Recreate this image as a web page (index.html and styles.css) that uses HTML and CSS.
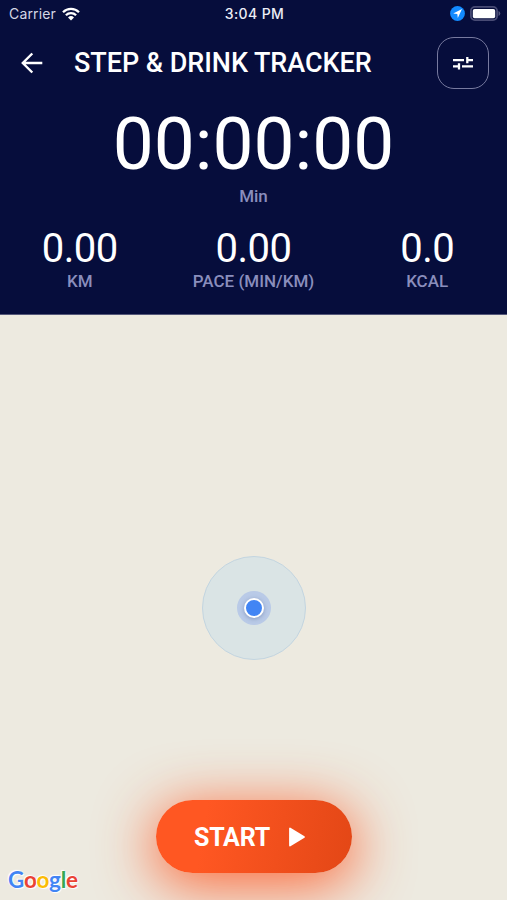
FILE: index.html
```
<!DOCTYPE html>
<html lang="en">
<head>
    <meta charset="UTF-8">
    <meta name="viewport" content="width=device-width, initial-scale=1.0">
    <title>Step &amp; Drink Tracker</title>
    <link rel="stylesheet" href="styles.css">
</head>
<body>
    <div class="header">
        <div class="status-bar">
            <div class="status-left">
                <span>Carrier</span>
                <svg class="wifi" viewBox="0 0 18 14">
                    <path d="M1 5.2a11.4 11.4 0 0 1 16 0M3.9 8.2a7.2 7.2 0 0 1 10.2 0" fill="none" stroke="#fff" stroke-width="2.3"/>
                    <path d="M9 13.5l-3-3.1a4.3 4.3 0 0 1 6 0z" fill="#fff"/>
                </svg>
            </div>
            <span class="time">3:04 PM</span>
            <div class="status-right">
                <svg class="location" viewBox="0 0 15 15">
                    <circle cx="7.5" cy="7.5" r="7.4" fill="#128aff"/>
                    <path d="M12 3L3.2 7.4l4.1.5.5 4.1z" fill="#fff"/>
                </svg>
                <svg class="battery" viewBox="0 0 31 15">
                    <rect x=".9" y=".9" width="26.2" height="13.2" rx="4" fill="none" stroke="#484b74" stroke-width="1.8"/>
                    <rect x="2.8" y="3" width="22.4" height="9.2" rx="1.8" fill="#fff"/>
                    <path d="M28.5 5v5q1.8-.7 1.8-2.5T28.5 5z" fill="#55587f"/>
                </svg>
            </div>
        </div>

        <div class="title-bar">
            <svg class="back" viewBox="0 0 22 22">
                <path d="M21.3 11H2M11.3 1.5L1.8 11l9.5 9.5" fill="none" stroke="#fff" stroke-width="2.4"/>
            </svg>
            <h1>STEP &amp; DRINK TRACKER</h1>
            <button class="settings">
                <svg viewBox="0 0 20 14">
                    <path d="M0 4.1h11M13.2 4.1H20M14.3 1v6.2M0 10.3h5M6 7.2v6.2M9 10.3h11" fill="none" stroke="#fff" stroke-width="2.3"/>
                </svg>
            </button>
        </div>

        <div class="timer">00:00:00</div>
        <div class="label">Min</div>

        <div class="stats">
            <div class="stat">
                <div class="value">0.00</div>
                <div class="label">KM</div>
            </div>
            <div class="stat">
                <div class="value">0.00</div>
                <div class="label">PACE (MIN/KM)</div>
            </div>
            <div class="stat">
                <div class="value">0.0</div>
                <div class="label">KCAL</div>
            </div>
        </div>
    </div>

    <div class="map">
        <div class="accuracy">
            <div class="halo">
                <div class="dot"></div>
            </div>
        </div>
        <button class="start">
            <span>START</span>
            <svg viewBox="0 0 18 20">
                <path d="M2 1.5v17L16 10z" fill="#fff" stroke="#fff" stroke-width="1.8" stroke-linejoin="round"/>
            </svg>
        </button>
        <div class="google"><span class="blue">G</span><span class="red">o</span><span class="yellow">o</span><span class="blue">g</span><span class="green">l</span><span class="red">e</span></div>
    </div>
</body>
</html>
```
FILE: styles.css
```
* {
    box-sizing: border-box;
}
body {
    margin: 0;
    height: 900px;
    display: flex;
    flex-direction: column;
    overflow: hidden;
    font-family: Roboto, sans-serif;
    color: #fff;
}
button {
    font-family: inherit;
    color: #fff;
    padding: 0;
    cursor: pointer;
}
.header {
    height: 315px;
    background-color: #060d3c;
    border-bottom: 1px solid #55587a;
    flex-shrink: 0;
}
.status-bar {
    height: 27px;
    padding: 0 6px 0 9px;
    display: grid;
    grid-template-columns: 1fr auto 1fr;
    align-items: center;
    font-family: Inter, sans-serif;
    font-size: 14px;
    color: #d4d6e4;
}
.status-left,
.status-right {
    display: flex;
    align-items: center;
    gap: 6px;
}
.status-left {
    letter-spacing: 0.15px;
}
.status-right {
    justify-content: flex-end;
    gap: 5px;
}
.time {
    font-weight: 500;
    letter-spacing: 0.4px;
    color: #eceef6;
    margin-right: 1px;
}
.wifi {
    width: 18px;
    height: 14px;
}
.location {
    width: 15px;
    height: 15px;
}
.battery {
    width: 31px;
    height: 15px;
}
.title-bar {
    height: 71px;
    padding: 1px 18px 0 21px;
    display: flex;
    align-items: center;
}
.back {
    width: 22px;
    height: 22px;
    margin-right: 31px;
}
h1 {
    margin: 0;
    flex: 1;
    font-size: 27px;
    font-weight: 500;
    letter-spacing: -0.05px;
    line-height: 32px;
    white-space: nowrap;
}
.settings {
    width: 52px;
    height: 52px;
    border: 1.5px solid #777a9f;
    border-radius: 17px;
    background: none;
    display: flex;
    align-items: center;
    justify-content: center;
}
.settings svg {
    width: 20px;
    height: 14px;
}
.timer {
    height: 88px;
    line-height: 92px;
    font-size: 73px;
    text-align: center;
}
.label {
    font-size: 17px;
    font-weight: 500;
    line-height: 20px;
    color: #8a8ebc;
    text-align: center;
}
.stats {
    display: grid;
    grid-template-columns: repeat(3, 1fr);
    margin: 18px -7px 0;
}
.value {
    height: 47px;
    font-size: 40px;
    letter-spacing: -0.5px;
    line-height: 49px;
    text-align: center;
}
.map {
    flex: 1;
    position: relative;
    background-color: #edeae0;
    display: flex;
    align-items: center;
    justify-content: center;
}
.accuracy {
    width: 104px;
    height: 104px;
    border: 1px solid #c3d5e0;
    border-radius: 50%;
    background-color: #dae4e5;
    display: flex;
    align-items: center;
    justify-content: center;
}
.halo {
    width: 34px;
    height: 34px;
    border-radius: 50%;
    background-color: #b9cae7;
    display: flex;
    align-items: center;
    justify-content: center;
}
.dot {
    width: 20px;
    height: 20px;
    border: 2px solid #fff;
    border-radius: 50%;
    background-color: #4285f4;
    box-shadow: 0 1px 4px rgba(60, 80, 130, 0.4);
}
/* floats over the map */
.start {
    position: absolute;
    left: 156px;
    bottom: 27px;
    width: 196px;
    height: 73px;
    border: none;
    border-radius: 37px;
    background: linear-gradient(100deg, #ff5722 25%, #e34716 100%);
    box-shadow: 0 10px 56px 4px rgba(255, 87, 34, 0.85);
    display: flex;
    align-items: center;
    padding-left: 38px;
    padding-top: 1px;
    gap: 18px;
    font-size: 25px;
    font-weight: 700;
    letter-spacing: -0.25px;
}
.start svg {
    width: 18px;
    height: 20px;
}
.google {
    position: absolute;
    left: 8px;
    bottom: 6px;
    font-family: Lato, sans-serif;
    font-size: 22.5px;
    font-weight: 700;
    letter-spacing: -0.3px;
    line-height: 28px;
    text-shadow: 0 0 2px #fff, 1px 1px 1px #fff, -1px -1px 1px #fff;
}
.blue {
    color: #4285f4;
}
.red {
    color: #ea4335;
}
.yellow {
    color: #fbbc05;
}
.green {
    color: #34a853;
}
```
